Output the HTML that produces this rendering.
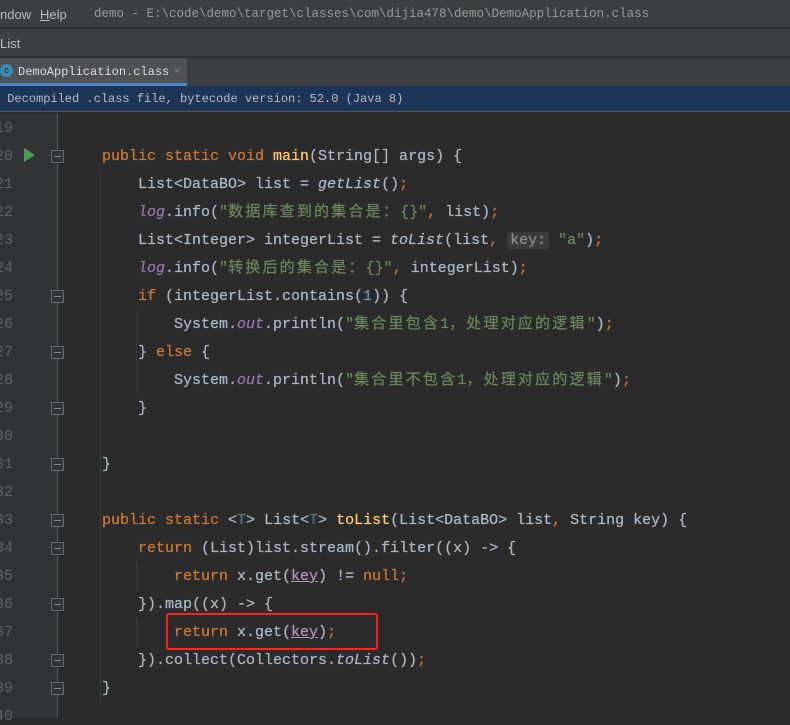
<!DOCTYPE html>
<html><head><meta charset="utf-8"><style>
*{margin:0;padding:0;box-sizing:border-box}
body{width:790px;height:718px;overflow:hidden;background:#2b2b2b;font-family:"Liberation Mono","Noto Sans CJK SC",monospace;position:relative}
.bar{position:absolute;left:0;width:790px;background:#3c3f41;color:#bbbbbb;font-family:"Liberation Sans",sans-serif;font-size:13px}
#menu{top:0;height:28px;border-bottom:1px solid #323232}
#nav{top:29px;height:28px;border-bottom:1px solid #323232}
#tabs{top:58px;height:28px}
#info{position:absolute;top:86px;left:0;width:790px;height:26px;background:#1d3658;color:#bbbbbb;font-size:12px;line-height:26px;border-bottom:1px solid #555}
#gut{position:absolute;top:113px;left:0;width:58px;height:605px;background:#313335;border-right:1px solid #555}
.ln{position:absolute;left:-7px;width:20px;text-align:right;color:#606366;font-size:15px}
.code{position:absolute;left:102px;font-size:15px;color:#a9b7c6;white-space:pre;line-height:28px;height:28px;-webkit-text-stroke:0.25px currentColor}
.k{color:#cc7832}.m{color:#ffc66d}.s{color:#6a8759}.i{color:#9876aa;font-style:italic}.it{font-style:italic}.n{color:#6897bb}.t{color:#507874}
.c{letter-spacing:2.2px}
.u{color:#b294bb;text-decoration:underline}
.g{position:absolute;width:1px;background:#3b3b3b}
.f{position:absolute;left:51px;width:13px;height:13px;border:1px solid #6a6a6a;background:#313335}
.f::after{content:"";position:absolute;left:2px;top:5px;width:7px;height:1px;background:#888}
</style></head><body>
<div class="bar" id="menu"><span style="position:absolute;left:0;top:7px">ndow</span><span style="position:absolute;left:40px;top:7px"><u>H</u>elp</span><span style="position:absolute;left:94px;top:7px;color:#999;font-family:'Liberation Mono';font-size:12.5px">demo - E:\code\demo\target\classes\com\dijia478\demo\DemoApplication.class</span></div>
<div class="bar" id="nav"><span style="position:absolute;left:0;top:7px">List</span></div>
<div class="bar" id="tabs"><div style="position:absolute;left:0;top:0;width:187px;height:28px;background:#4e5254"></div>
<div style="position:absolute;left:0;top:25px;width:187px;height:3px;background:#4a88c7"></div>
<div style="position:absolute;left:0;top:6px;width:13px;height:13px;border-radius:50%;background:#3b8cb3;color:#222;font-size:9px;text-align:center;line-height:13px">c</div>
<span style="position:absolute;left:18px;top:7px;font-family:'Liberation Mono';font-size:12px;color:#ddd">DemoApplication.class</span><span style="position:absolute;left:173px;top:5px;color:#777">×</span></div>
<div id="info">&nbsp;Decompiled .class file, bytecode version: 52.0 (Java 8)</div>
<div id="gut"></div>
<div class="g" style="left:100px;top:172px;height:533px"></div>
<div class="g" style="left:136px;top:310px;height:84px"></div>
<div class="g" style="left:136px;top:562px;height:30px"></div>
<div class="g" style="left:136px;top:618px;height:30px"></div>
<div id="lines"></div>
<svg style="position:absolute;left:24px;top:148px" width="12" height="14"><path d="M0 0L11 7L0 14Z" fill="#499c54"/></svg>
<div class="f" style="top:150px"></div><div class="f" style="top:290px"></div><div class="f" style="top:346px"></div><div class="f" style="top:402px"></div><div class="f" style="top:458px"></div><div class="f" style="top:514px"></div><div class="f" style="top:542px"></div><div class="f" style="top:598px"></div><div class="f" style="top:654px"></div><div class="f" style="top:682px"></div>
<div class="code" style="top:143px"><span class="k">public static void </span><span class="m">main</span>(String[] args) {</div>
<div class="code" style="top:171px">    List&lt;DataBO&gt; list = <span class="it">getList</span>()<span class="k">;</span></div>
<div class="code" style="top:199px">    <span class="i">log</span>.info(<span class="s">"<span class="c">数据库查到的集合是：</span>{}"</span><span class="k">, </span>list)<span class="k">;</span></div>
<div class="code" style="top:227px">    List&lt;Integer&gt; integerList = <span class="it">toList</span>(list<span class="k">, </span><span style="background:#3b3b3b;color:#8c8c8c;padding:0 3px;border-radius:3px">key:</span> <span class="s">"a"</span>)<span class="k">;</span></div>
<div class="code" style="top:255px">    <span class="i">log</span>.info(<span class="s">"<span class="c">转换后的集合是：</span>{}"</span><span class="k">, </span>integerList)<span class="k">;</span></div>
<div class="code" style="top:283px">    <span class="k">if </span>(integerList.contains(<span class="n">1</span>)) {</div>
<div class="code" style="top:311px">        System.<span class="i">out</span>.println(<span class="s">"<span class="c">集合里包含</span>1<span class="c">，处理对应的逻辑</span>"</span>)<span class="k">;</span></div>
<div class="code" style="top:339px">    } <span class="k">else </span>{</div>
<div class="code" style="top:367px">        System.<span class="i">out</span>.println(<span class="s">"<span class="c">集合里不包含</span>1<span class="c">，处理对应的逻辑</span>"</span>)<span class="k">;</span></div>
<div class="code" style="top:395px">    }</div>
<div class="code" style="top:451px">}</div>
<div class="code" style="top:507px"><span class="k">public static </span>&lt;<span class="t">T</span>&gt; List&lt;<span class="t">T</span>&gt; <span class="m">toList</span>(List&lt;DataBO&gt; list<span class="k">, </span>String key) {</div>
<div class="code" style="top:535px">    <span class="k">return </span>(List)list.stream().filter((x) -&gt; {</div>
<div class="code" style="top:563px">        <span class="k">return </span>x.get(<span class="u">key</span>) != <span class="k">null;</span></div>
<div class="code" style="top:591px">    }).map((x) -&gt; {</div>
<div class="code" style="top:619px">        <span class="k">return </span>x.get(<span class="u">key</span>)<span class="k">;</span></div>
<div class="code" style="top:647px">    }).collect(Collectors.<span class="it">toList</span>())<span class="k">;</span></div>
<div class="code" style="top:675px">}</div>
<div style="position:absolute;left:166px;top:613px;width:212px;height:37px;border:2px solid #ff2020;border-radius:3px"></div>
<script>
var h='';for(var i=19;i<=40;i++){h+='<div class="ln" style="top:'+(120+(i-19)*28)+'px">'+i+'</div>';}
document.getElementById('lines').innerHTML=h;
</script>
</body></html>
